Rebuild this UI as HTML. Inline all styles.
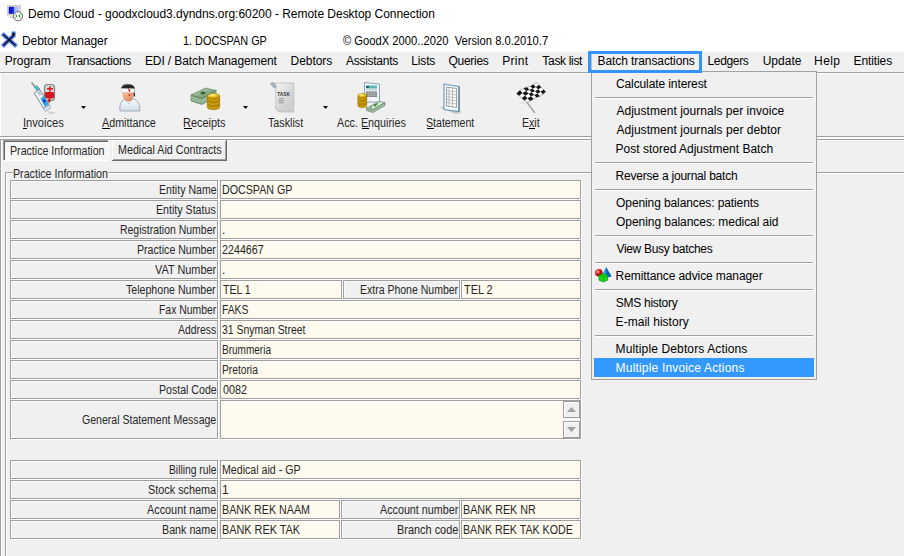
<!DOCTYPE html>
<html><head><meta charset="utf-8"><style>
html,body{margin:0;padding:0;}
body{width:904px;height:556px;position:relative;overflow:hidden;background:#f0f0f0;font-family:"Liberation Sans", sans-serif;}
.t{position:absolute;white-space:pre;line-height:20px;font-family:"Liberation Sans", sans-serif;}
.a{position:absolute;box-sizing:border-box;}
</style></head><body>
<div class="a" style="left:0px;top:0px;width:904px;height:52px;background:#fff"></div>
<div class="a" style="left:0px;top:72px;width:904px;height:1px;background:#a0a0a0"></div>
<div class="a" style="left:0px;top:73px;width:904px;height:1px;background:#ffffff"></div>
<div class="a" style="left:0px;top:73px;width:1px;height:63px;background:#ffffff"></div>
<div class="a" style="left:0px;top:136px;width:904px;height:1px;background:#a0a0a0"></div>
<div class="a" style="left:0px;top:137px;width:904px;height:1px;background:#ffffff"></div>
<div class="a" style="left:0px;top:138px;width:904px;height:1px;background:#ffffff"></div>
<div class="a" style="left:0px;top:139px;width:904px;height:1px;background:#a0a0a0"></div>
<div class="a" style="left:0px;top:140px;width:904px;height:1px;background:#f6f6f6"></div>
<div class="a" style="left:0px;top:139px;width:1px;height:417px;background:#a0a0a0"></div>
<div class="a" style="left:1px;top:140px;width:1px;height:416px;background:#ffffff"></div>
<div class="a" style="left:3px;top:140px;width:105px;height:20px;background:repeating-conic-gradient(#fff 0 25%,#f0f0f0 0 50%) 0 0/2px 2px;border-top:1px solid #a0a0a0;border-left:1px solid #a0a0a0;box-shadow:inset 1px 1px 0 #696969, 1px 1px 0 #fff"></div>
<div class="a" style="left:112px;top:140px;width:115px;height:21px;background:#f0f0f0;border-right:1px solid #696969;border-bottom:1px solid #696969;box-shadow:inset 1px 1px 0 #fff, inset -1px -1px 0 #a0a0a0"></div>
<div class="a" style="left:5px;top:172px;width:899px;height:1px;background:#a0a0a0"></div>
<div class="a" style="left:6px;top:173px;width:898px;height:1px;background:#ffffff"></div>
<div class="a" style="left:5px;top:172px;width:1px;height:384px;background:#a0a0a0"></div>
<div class="a" style="left:6px;top:173px;width:1px;height:383px;background:#ffffff"></div>
<div class="a" style="left:13px;top:165px;width:95px;height:12px;background:#f0f0f0"></div>
<div class="a" style="left:10px;top:180px;width:208px;height:19px;background:#f0f0f0;border:1px solid #a0a0a0;box-shadow:inset 1px 1px 0 rgba(255,255,255,0.6), 1px 1px 0 #fff"></div>
<div class="a" style="left:220px;top:180px;width:361px;height:19px;background:#fefaee;border:1px solid #a0a0a0;box-shadow:inset 1px 1px 0 rgba(255,255,255,0.6), 1px 1px 0 #fff"></div>
<div class="a" style="left:10px;top:200px;width:208px;height:19px;background:#f0f0f0;border:1px solid #a0a0a0;box-shadow:inset 1px 1px 0 rgba(255,255,255,0.6), 1px 1px 0 #fff"></div>
<div class="a" style="left:220px;top:200px;width:361px;height:19px;background:#fefaee;border:1px solid #a0a0a0;box-shadow:inset 1px 1px 0 rgba(255,255,255,0.6), 1px 1px 0 #fff"></div>
<div class="a" style="left:10px;top:220px;width:208px;height:19px;background:#f0f0f0;border:1px solid #a0a0a0;box-shadow:inset 1px 1px 0 rgba(255,255,255,0.6), 1px 1px 0 #fff"></div>
<div class="a" style="left:220px;top:220px;width:361px;height:19px;background:#fefaee;border:1px solid #a0a0a0;box-shadow:inset 1px 1px 0 rgba(255,255,255,0.6), 1px 1px 0 #fff"></div>
<div class="a" style="left:10px;top:240px;width:208px;height:19px;background:#f0f0f0;border:1px solid #a0a0a0;box-shadow:inset 1px 1px 0 rgba(255,255,255,0.6), 1px 1px 0 #fff"></div>
<div class="a" style="left:220px;top:240px;width:361px;height:19px;background:#fefaee;border:1px solid #a0a0a0;box-shadow:inset 1px 1px 0 rgba(255,255,255,0.6), 1px 1px 0 #fff"></div>
<div class="a" style="left:10px;top:260px;width:208px;height:19px;background:#f0f0f0;border:1px solid #a0a0a0;box-shadow:inset 1px 1px 0 rgba(255,255,255,0.6), 1px 1px 0 #fff"></div>
<div class="a" style="left:220px;top:260px;width:361px;height:19px;background:#fefaee;border:1px solid #a0a0a0;box-shadow:inset 1px 1px 0 rgba(255,255,255,0.6), 1px 1px 0 #fff"></div>
<div class="a" style="left:10px;top:280px;width:208px;height:19px;background:#f0f0f0;border:1px solid #a0a0a0;box-shadow:inset 1px 1px 0 rgba(255,255,255,0.6), 1px 1px 0 #fff"></div>
<div class="a" style="left:220px;top:280px;width:122px;height:19px;background:#fefaee;border:1px solid #a0a0a0;box-shadow:inset 1px 1px 0 rgba(255,255,255,0.6), 1px 1px 0 #fff"></div>
<div class="a" style="left:343px;top:280px;width:117px;height:19px;background:#f0f0f0;border:1px solid #a0a0a0;box-shadow:inset 1px 1px 0 rgba(255,255,255,0.6), 1px 1px 0 #fff"></div>
<div class="a" style="left:461px;top:280px;width:120px;height:19px;background:#fefaee;border:1px solid #a0a0a0;box-shadow:inset 1px 1px 0 rgba(255,255,255,0.6), 1px 1px 0 #fff"></div>
<div class="a" style="left:10px;top:300px;width:208px;height:19px;background:#f0f0f0;border:1px solid #a0a0a0;box-shadow:inset 1px 1px 0 rgba(255,255,255,0.6), 1px 1px 0 #fff"></div>
<div class="a" style="left:220px;top:300px;width:361px;height:19px;background:#fefaee;border:1px solid #a0a0a0;box-shadow:inset 1px 1px 0 rgba(255,255,255,0.6), 1px 1px 0 #fff"></div>
<div class="a" style="left:10px;top:320px;width:208px;height:19px;background:#f0f0f0;border:1px solid #a0a0a0;box-shadow:inset 1px 1px 0 rgba(255,255,255,0.6), 1px 1px 0 #fff"></div>
<div class="a" style="left:220px;top:320px;width:361px;height:19px;background:#fefaee;border:1px solid #a0a0a0;box-shadow:inset 1px 1px 0 rgba(255,255,255,0.6), 1px 1px 0 #fff"></div>
<div class="a" style="left:10px;top:340px;width:208px;height:19px;background:#f0f0f0;border:1px solid #a0a0a0;box-shadow:inset 1px 1px 0 rgba(255,255,255,0.6), 1px 1px 0 #fff"></div>
<div class="a" style="left:220px;top:340px;width:361px;height:19px;background:#fefaee;border:1px solid #a0a0a0;box-shadow:inset 1px 1px 0 rgba(255,255,255,0.6), 1px 1px 0 #fff"></div>
<div class="a" style="left:10px;top:360px;width:208px;height:19px;background:#f0f0f0;border:1px solid #a0a0a0;box-shadow:inset 1px 1px 0 rgba(255,255,255,0.6), 1px 1px 0 #fff"></div>
<div class="a" style="left:220px;top:360px;width:361px;height:19px;background:#fefaee;border:1px solid #a0a0a0;box-shadow:inset 1px 1px 0 rgba(255,255,255,0.6), 1px 1px 0 #fff"></div>
<div class="a" style="left:10px;top:380px;width:208px;height:19px;background:#f0f0f0;border:1px solid #a0a0a0;box-shadow:inset 1px 1px 0 rgba(255,255,255,0.6), 1px 1px 0 #fff"></div>
<div class="a" style="left:220px;top:380px;width:361px;height:19px;background:#fefaee;border:1px solid #a0a0a0;box-shadow:inset 1px 1px 0 rgba(255,255,255,0.6), 1px 1px 0 #fff"></div>
<div class="a" style="left:10px;top:400px;width:208px;height:39px;background:#f0f0f0;border:1px solid #a0a0a0;box-shadow:inset 1px 1px 0 rgba(255,255,255,0.6), 1px 1px 0 #fff"></div>
<div class="a" style="left:220px;top:400px;width:361px;height:39px;background:#fefaee;border:1px solid #a0a0a0;box-shadow:inset 1px 1px 0 rgba(255,255,255,0.6), 1px 1px 0 #fff"></div>
<div class="a" style="left:563px;top:401px;width:17px;height:17px;background:#f0f0f0;border:1px solid #a0a0a0;box-shadow:inset 1px 1px 0 #fff"></div>
<div class="a" style="left:563px;top:418px;width:17px;height:3px;background:repeating-conic-gradient(#fff 0 25%,#f0f0f0 0 50%) 0 0/2px 2px"></div>
<div class="a" style="left:563px;top:421px;width:17px;height:17px;background:#f0f0f0;border:1px solid #a0a0a0;box-shadow:inset 1px 1px 0 #fff"></div>
<svg class="a" style="left:563px;top:401px" width="17" height="37"><path d="M4 11h9l-4.5-5z" fill="#a0a0a0"/><path d="M4 26h9l-4.5 5z" fill="#a0a0a0"/></svg>
<div class="a" style="left:10px;top:460px;width:208px;height:19px;background:#f0f0f0;border:1px solid #a0a0a0;box-shadow:inset 1px 1px 0 rgba(255,255,255,0.6), 1px 1px 0 #fff"></div>
<div class="a" style="left:220px;top:460px;width:361px;height:19px;background:#fefaee;border:1px solid #a0a0a0;box-shadow:inset 1px 1px 0 rgba(255,255,255,0.6), 1px 1px 0 #fff"></div>
<div class="a" style="left:10px;top:480px;width:208px;height:19px;background:#f0f0f0;border:1px solid #a0a0a0;box-shadow:inset 1px 1px 0 rgba(255,255,255,0.6), 1px 1px 0 #fff"></div>
<div class="a" style="left:220px;top:480px;width:361px;height:19px;background:#fefaee;border:1px solid #a0a0a0;box-shadow:inset 1px 1px 0 rgba(255,255,255,0.6), 1px 1px 0 #fff"></div>
<div class="a" style="left:10px;top:500px;width:208px;height:19px;background:#f0f0f0;border:1px solid #a0a0a0;box-shadow:inset 1px 1px 0 rgba(255,255,255,0.6), 1px 1px 0 #fff"></div>
<div class="a" style="left:220px;top:500px;width:120px;height:19px;background:#fefaee;border:1px solid #a0a0a0;box-shadow:inset 1px 1px 0 rgba(255,255,255,0.6), 1px 1px 0 #fff"></div>
<div class="a" style="left:341px;top:500px;width:119px;height:19px;background:#f0f0f0;border:1px solid #a0a0a0;box-shadow:inset 1px 1px 0 rgba(255,255,255,0.6), 1px 1px 0 #fff"></div>
<div class="a" style="left:461px;top:500px;width:120px;height:19px;background:#fefaee;border:1px solid #a0a0a0;box-shadow:inset 1px 1px 0 rgba(255,255,255,0.6), 1px 1px 0 #fff"></div>
<div class="a" style="left:10px;top:520px;width:208px;height:19px;background:#f0f0f0;border:1px solid #a0a0a0;box-shadow:inset 1px 1px 0 rgba(255,255,255,0.6), 1px 1px 0 #fff"></div>
<div class="a" style="left:220px;top:520px;width:120px;height:19px;background:#fefaee;border:1px solid #a0a0a0;box-shadow:inset 1px 1px 0 rgba(255,255,255,0.6), 1px 1px 0 #fff"></div>
<div class="a" style="left:341px;top:520px;width:119px;height:19px;background:#f0f0f0;border:1px solid #a0a0a0;box-shadow:inset 1px 1px 0 rgba(255,255,255,0.6), 1px 1px 0 #fff"></div>
<div class="a" style="left:461px;top:520px;width:120px;height:19px;background:#fefaee;border:1px solid #a0a0a0;box-shadow:inset 1px 1px 0 rgba(255,255,255,0.6), 1px 1px 0 #fff"></div>
<div class="a" style="left:591px;top:71px;width:226px;height:309px;background:#f0f0f0;border:1px solid #a0a0a0"></div>
<div class="a" style="left:595px;top:97px;width:218px;height:1px;background:#a0a0a0"></div>
<div class="a" style="left:595px;top:98px;width:218px;height:1px;background:#ffffff"></div>
<div class="a" style="left:595px;top:162px;width:218px;height:1px;background:#a0a0a0"></div>
<div class="a" style="left:595px;top:163px;width:218px;height:1px;background:#ffffff"></div>
<div class="a" style="left:595px;top:189px;width:218px;height:1px;background:#a0a0a0"></div>
<div class="a" style="left:595px;top:190px;width:218px;height:1px;background:#ffffff"></div>
<div class="a" style="left:595px;top:235px;width:218px;height:1px;background:#a0a0a0"></div>
<div class="a" style="left:595px;top:236px;width:218px;height:1px;background:#ffffff"></div>
<div class="a" style="left:595px;top:262px;width:218px;height:1px;background:#a0a0a0"></div>
<div class="a" style="left:595px;top:263px;width:218px;height:1px;background:#ffffff"></div>
<div class="a" style="left:595px;top:289px;width:218px;height:1px;background:#a0a0a0"></div>
<div class="a" style="left:595px;top:290px;width:218px;height:1px;background:#ffffff"></div>
<div class="a" style="left:595px;top:335px;width:218px;height:1px;background:#a0a0a0"></div>
<div class="a" style="left:595px;top:336px;width:218px;height:1px;background:#ffffff"></div>
<div class="a" style="left:594px;top:358px;width:220px;height:19px;background:#3399ff"></div>
<div class="a" style="left:588px;top:51px;width:114px;height:22px;border:3px solid #3393ff;background:#f0f0f0"></div>
<div class="a" style="left:591px;top:54px;width:1px;height:16px;background:#c8c0b8"></div>
<svg class="a" style="left:81px;top:106px" width="6" height="3"><path d="M0 0h5l-2.5 3z" fill="#000"/></svg>
<svg class="a" style="left:243px;top:106px" width="6" height="3"><path d="M0 0h5l-2.5 3z" fill="#000"/></svg>
<svg class="a" style="left:323px;top:106px" width="6" height="3"><path d="M0 0h5l-2.5 3z" fill="#000"/></svg>
<div class="a" style="left:23px;top:128px;width:4px;height:1px;background:#000"></div>
<div class="a" style="left:102px;top:128px;width:8px;height:1px;background:#000"></div>
<div class="a" style="left:184px;top:128px;width:8px;height:1px;background:#000"></div>
<div class="a" style="left:427px;top:128px;width:7px;height:1px;background:#000"></div>
<div class="a" style="left:362px;top:128px;width:7px;height:1px;background:#000"></div>
<div class="a" style="left:529px;top:128px;width:6px;height:1px;background:#000"></div>
<svg class="a" style="left:0;top:0" width="904" height="556" viewBox="0 0 904 556">
<defs>
<linearGradient id="gsk" x1="0" y1="0" x2="1" y2="1"><stop offset="0" stop-color="#f7c3a0"/><stop offset="1" stop-color="#d9825a"/></linearGradient>
<linearGradient id="gcoat" x1="0" y1="0" x2="0" y2="1"><stop offset="0" stop-color="#ffffff"/><stop offset="1" stop-color="#cfdce8"/></linearGradient>
<radialGradient id="ggold" cx="0.4" cy="0.3" r="0.8"><stop offset="0" stop-color="#fff6a0"/><stop offset="0.5" stop-color="#e8c21a"/><stop offset="1" stop-color="#a67a00"/></radialGradient>
<linearGradient id="gbill" x1="0" y1="0" x2="1" y2="1"><stop offset="0" stop-color="#b9d4b9"/><stop offset="1" stop-color="#5c8a5c"/></linearGradient>
<linearGradient id="gpaper" x1="0" y1="0" x2="1" y2="1"><stop offset="0" stop-color="#f4f4f4"/><stop offset="1" stop-color="#c4c4c4"/></linearGradient>
<radialGradient id="gred" cx="0.35" cy="0.35" r="0.7"><stop offset="0" stop-color="#ffb0b0"/><stop offset="0.5" stop-color="#e01010"/><stop offset="1" stop-color="#800000"/></radialGradient>
</defs>
<!-- RDP icon -->
<linearGradient id="gscr" x1="0" y1="0" x2="1" y2="0"><stop offset="0" stop-color="#0010c8"/><stop offset="0.45" stop-color="#1a2ae8"/><stop offset="0.5" stop-color="#90a8ff"/><stop offset="1" stop-color="#c8d4ff"/></linearGradient>
<rect x="7.3" y="5.3" width="13.4" height="9.8" fill="#dcd8d0" stroke="#c4c0b8" stroke-width="0.6"/>
<rect x="8.8" y="6.8" width="10.6" height="7" fill="url(#gscr)"/>
<rect x="10" y="16.5" width="6" height="1.6" fill="#c8c8c8"/>
<circle cx="18" cy="16.2" r="4.6" fill="#f6f6f6" stroke="#6a6a6a" stroke-width="1"/>
<path d="M15.3 14.5l1.7 1.6-1.7 1.7M20.7 14.3l-1.8 1.7 1.8 1.6" stroke="#109a10" stroke-width="1" fill="none"/>
<!-- X app icon -->
<g stroke="#3a6cf8" stroke-width="4.2" stroke-linecap="square" fill="none" opacity="0.85">
<path d="M3.8 35l11.2 10M3.8 45l9.8-9.5V33.5"/>
</g>
<g stroke="#000" stroke-width="1.3" stroke-linecap="square" fill="none">
<path d="M3.8 35l11.2 10M3.8 45l9.8-9.5V33.5"/>
</g>
<rect x="12.3" y="33" width="2.4" height="2.2" fill="#000"/>
<!-- syringe -->
<rect x="44.5" y="84.5" width="10" height="16" rx="3" fill="#d4d8d8" stroke="#7a8484" stroke-width="1.2"/>
<path d="M45 92.5q5-1.5 9 0v5q-4 2.5-9 0z" fill="#d8141a"/>
<path d="M47 88h2.2v-1.8h1.6v1.8h2.2v1.6h-2.2v2h-1.6v-2h-2.2z" fill="#e01818"/>
<path d="M48.3 99h2v3.5h-2z" fill="#c01010"/>
<path d="M31.5 82.5l4.5 5.5" stroke="#8a8a8a" stroke-width="1.4"/>
<path d="M34.5 87.5l2.5-1.8 3 3.8-2.5 1.8z" fill="#30c8e0" stroke="#5a8a96" stroke-width="0.6"/>
<path d="M34.3 93.3l4.9-4.3 10 15.8-5.6 3.6z" fill="#eef6fa" stroke="#70788a" stroke-width="0.9"/>
<path d="M40.5 98.5l3.5-2.5 4.6 8.3-3.8 2.4z" fill="#2aa4ec"/>
<path d="M42.5 100.5l2-1.5 1.5 2.5-2 1.5z" fill="#0a3ac8"/>
<path d="M37 92l2-1.5 2.5 4-2 1.5z" fill="#b8c4cc"/>
<path d="M43.5 108.5l5.5-3.5 1.8 2.8-5.5 3.5z" fill="#dde6ee" stroke="#8a90a0" stroke-width="0.7"/>
<path d="M47 111l10 1.5-7 2z" fill="#bdbdbd" opacity="0.6"/>
<!-- admittance person -->
<path d="M120 111q-1.5-9 5.5-12.5l3.5 2.5 4-2.5q7.5 3 7 12.5z" fill="url(#gcoat)" stroke="#98a6b2" stroke-width="0.9"/>
<path d="M124.5 99l4.5 5 4-5" fill="none" stroke="#b0bcc6" stroke-width="0.8"/>
<path d="M122.3 91.5q-0.3 9.5 6 10q5.5 0 5.5-9.5z" fill="url(#gsk)"/>
<path d="M121 89.5q0-5 7-5.3 6.5 0 7 5v7.5l-1.3-0.5v-5h-12.6z" fill="#262626"/>
<path d="M122 85.5q3-1.5 6-1.3" stroke="#777" stroke-width="0.7" fill="none"/>
<path d="M121 88.5l13.6 0.2v3.8l-13.6-0.2z" fill="#fafafa" stroke="#c8c8c8" stroke-width="0.5"/>
<path d="M128.3 89q1.6 1 1.4 2.8" stroke="#e00000" stroke-width="1.2" fill="none"/>
<path d="M128.7 94q1 0.8 1 2" stroke="#e00000" stroke-width="1" fill="none"/>
<!-- receipts: bills + coins -->
<path d="M191 95l14.5-7 11 2.5-14 8z" fill="url(#gbill)" stroke="#5a7a5a" stroke-width="0.6"/>
<path d="M191 95v6l11 3.5 14-8v-6l-14 8z" fill="#7da27d" stroke="#5a7a5a" stroke-width="0.6"/>
<path d="M191 97l11 3.5 14-8M191 99l11 3.5 14-8" stroke="#cfe3cf" stroke-width="0.6" fill="none"/>
<ellipse cx="203" cy="93" rx="2.5" ry="1.2" fill="#2f5f2f"/>
<path d="M207.3 104.0v3.2a6.2 2.6 0 0 0 12.4 0v-3.2z" fill="#c89a08" stroke="#8a6400" stroke-width="0.5"/>
<ellipse cx="213.5" cy="104.0" rx="6.2" ry="2.6" fill="url(#ggold)" stroke="#9a7200" stroke-width="0.5"/>
<path d="M207.3 100.0v3.2a6.2 2.6 0 0 0 12.4 0v-3.2z" fill="#c89a08" stroke="#8a6400" stroke-width="0.5"/>
<ellipse cx="213.5" cy="100.0" rx="6.2" ry="2.6" fill="url(#ggold)" stroke="#9a7200" stroke-width="0.5"/>
<path d="M207.3 96.0v3.2a6.2 2.6 0 0 0 12.4 0v-3.2z" fill="#c89a08" stroke="#8a6400" stroke-width="0.5"/>
<ellipse cx="213.5" cy="96.0" rx="6.2" ry="2.6" fill="url(#ggold)" stroke="#9a7200" stroke-width="0.5"/>
<!-- tasklist paper -->
<path d="M275 108q2 4 6 4.5h13v-2z" fill="#a8a8a8" opacity="0.5"/>
<path d="M276 83h17.8v28.2h-15q-2.5-1-3.5-3.5q1-3 0.5-6v-15q0-2.5-1-3.7z" fill="url(#gpaper)" stroke="#b4b4b4" stroke-width="0.7"/>
<path d="M270.3 83.5l4 4.5 2.2-1.6-3.4-4z" fill="#a4b8c4" stroke="#7a8a96" stroke-width="0.6"/>
<text x="277.3" y="96" font-family="Liberation Sans" font-weight="bold" font-size="5.4" fill="#383838" textLength="12.6" lengthAdjust="spacingAndGlyphs">TASK</text>
<path d="M278.5 98.8h5.3M278.5 100.8h5.3M278.5 102.8h5.3" stroke="#8a8a8a" stroke-width="0.9"/>
<path d="M277 109q8-6 16.8-4v6.2h-15z" fill="#d0d0d0" opacity="0.8"/>
<!-- acc enquiries -->
<path d="M364.5 82.5l15 1.5v18h-15z" fill="#f0f4f6" stroke="#7c9cb6" stroke-width="0.9"/>
<rect x="366" y="85.5" width="11" height="3" fill="#5ab8b8"/>
<rect x="366" y="86" width="3" height="2" fill="#1a6a6a"/>
<path d="M366 90h11" stroke="#9aa4a8" stroke-width="0.6"/>
<rect x="366" y="91.5" width="11" height="5.5" fill="#7a7e80"/>
<path d="M366 93.3h11M366 95.2h11M368.8 91.5v5.5M371.5 91.5v5.5M374.2 91.5v5.5" stroke="#d4dadc" stroke-width="0.5"/>
<path d="M357.9 102.8v2.6a4.4 2.1 0 0 0 8.8 0v-2.6z" fill="#c89a08" stroke="#8a6400" stroke-width="0.5"/>
<ellipse cx="362.3" cy="102.8" rx="4.4" ry="2.1" fill="url(#ggold)" stroke="#9a7200" stroke-width="0.5"/>
<path d="M357.9 99.2v2.6a4.4 2.1 0 0 0 8.8 0v-2.6z" fill="#c89a08" stroke="#8a6400" stroke-width="0.5"/>
<ellipse cx="362.3" cy="99.2" rx="4.4" ry="2.1" fill="url(#ggold)" stroke="#9a7200" stroke-width="0.5"/>
<path d="M357.9 95.6v2.6a4.4 2.1 0 0 0 8.8 0v-2.6z" fill="#c89a08" stroke="#8a6400" stroke-width="0.5"/>
<ellipse cx="362.3" cy="95.6" rx="4.4" ry="2.1" fill="url(#ggold)" stroke="#9a7200" stroke-width="0.5"/>
<path d="M366.5 108l12.5-6.5 6 1-12 7z" fill="#d6ead6" stroke="#5a7a5a" stroke-width="0.6"/>
<path d="M366.5 108v2.5l6.5 2 12-7v-3l-12 7z" fill="#9abc9a" stroke="#5a7a5a" stroke-width="0.6"/>
<path d="M370 107.5l2-1M376 104.5l2-1" stroke="#3a8a3a" stroke-width="1.2"/>
<circle cx="375" cy="105.3" r="1.3" fill="#3a8a3a"/>
<!-- statement page -->
<path d="M439.5 107.5l4.5-1.5 16.5 4.5v3l-5 0.5z" fill="#9a9a9a" opacity="0.45"/>
<path d="M444 84l15 2.5v25l-15-2z" fill="#f4f8fa" stroke="#6a9ab8" stroke-width="1.1"/><path d="M459 86.5v25" stroke="#4a6a88" stroke-width="1"/>
<path d="M446.5 87l10 1.5v19l-10-1.5z" fill="#fafafa" stroke="#8a8a8a" stroke-width="0.8"/>
<path d="M449 87.5v19M452.5 88v19M446.5 90.5l10 1.5M446.5 93.5l10 1.5M446.5 96.5l10 1.5M446.5 99.5l10 1.5M446.5 102.5l10 1.5" stroke="#9a9a9a" stroke-width="0.6"/>
<!-- exit flag -->
<path d="M527 102.5l8 10.5" stroke="#a4a4a4" stroke-width="1.5"/>
<path d="M520 103.5l7-1.5" stroke="#c0c0c0" stroke-width="0.6"/>
<path d="M516.50 93.50 L520.00 90.30 L523.70 88.30 L527.00 87.20 L530.30 86.30 L533.50 84.60 L536.70 82.60 L538.95 84.88 L541.20 87.15 L543.45 89.42 L545.70 91.70 L543.00 94.20 L539.90 96.20 L536.50 97.50 L533.40 99.00 L530.00 101.00 L527.00 102.70 L524.38 100.40 L521.75 98.10 L519.12 95.80z" fill="#fbfbfb" stroke="#707070" stroke-width="0.5"/>
<path d="M516.50 93.50 L520.00 90.30 L522.50 92.97 L519.12 95.80z M521.75 98.10 L525.00 95.65 L527.50 98.33 L524.38 100.40z M522.50 92.97 L526.12 90.97 L528.55 93.65 L525.00 95.65z M527.50 98.33 L530.98 96.33 L533.40 99.00 L530.00 101.00z M523.70 88.30 L527.00 87.20 L529.38 89.78 L526.12 90.97z M528.55 93.65 L531.75 92.35 L534.12 94.92 L530.98 96.33z M529.38 89.78 L532.70 88.78 L535.10 91.25 L531.75 92.35z M534.12 94.92 L537.50 93.72 L539.90 96.20 L536.50 97.50z M530.30 86.30 L533.50 84.60 L535.88 87.00 L532.70 88.78z M535.10 91.25 L538.25 89.40 L540.62 91.80 L537.50 93.72z M535.88 87.00 L538.95 84.88 L541.20 87.15 L538.25 89.40z M540.62 91.80 L543.45 89.42 L545.70 91.70 L543.00 94.20z" fill="#141414"/>
<!-- remittance icon -->
<path d="M606 267l5.5 9.5-5 1-5-1z" fill="#2a9af0"/>
<path d="M606 267l5.5 9.5-5 1z" fill="#0a62c0"/>
<circle cx="598.8" cy="272.8" r="3.8" fill="url(#gred)"/>
<path d="M599 275.2l4.3-1.7 4.3 1.7v5l-4.3 1.8-4.3-1.8z" fill="#18d818" stroke="#0a8a0a" stroke-width="0.6"/>
<path d="M599 275.2l4.3 1.7 4.3-1.7M603.3 276.9v5" stroke="#0a9a0a" stroke-width="0.5" fill="none"/>
</svg>
<div id="ti1" class="t" style="left:28.00px;top:4.00px;font-size:12.00px;letter-spacing:-0.029px;color:#000">Demo Cloud - goodxcloud3.dyndns.org:60200 - Remote Desktop Connection</div>
<div id="ti2" class="t" style="left:22.00px;top:31.00px;font-size:12.00px;letter-spacing:-0.081px;color:#000">Debtor Manager</div>
<div id="ti3" class="t" style="left:183.29px;top:31.00px;font-size:12.00px;letter-spacing:0.000px;color:#000;transform:scaleX(0.9072);transform-origin:0 0">1. DOCSPAN GP</div>
<div id="ti4" class="t" style="left:342.55px;top:31.00px;font-size:12.00px;letter-spacing:0.000px;color:#000;transform:scaleX(0.9338);transform-origin:0 0">© GoodX 2000..2020  Version 8.0.2010.7</div>
<div id="m0" class="t" style="left:4.65px;top:51.00px;font-size:12.00px;letter-spacing:0.021px;color:#000">Program</div>
<div id="m1" class="t" style="left:66.14px;top:51.00px;font-size:12.00px;letter-spacing:-0.278px;color:#000">Transactions</div>
<div id="m2" class="t" style="left:144.93px;top:51.00px;font-size:12.00px;letter-spacing:-0.098px;color:#000">EDI / Batch Management</div>
<div id="m3" class="t" style="left:290.62px;top:51.00px;font-size:12.00px;letter-spacing:-0.081px;color:#000">Debtors</div>
<div id="m4" class="t" style="left:346.12px;top:51.00px;font-size:12.00px;letter-spacing:-0.290px;color:#000">Assistants</div>
<div id="m5" class="t" style="left:411.37px;top:51.00px;font-size:12.00px;letter-spacing:-0.167px;color:#000">Lists</div>
<div id="m6" class="t" style="left:448.54px;top:51.00px;font-size:12.00px;letter-spacing:-0.300px;color:#000">Queries</div>
<div id="m7" class="t" style="left:502.34px;top:51.00px;font-size:12.00px;letter-spacing:0.266px;color:#000">Print</div>
<div id="m8" class="t" style="left:542.36px;top:51.00px;font-size:12.00px;letter-spacing:-0.326px;color:#000">Task list</div>
<div id="m9" class="t" style="left:597.62px;top:51.00px;font-size:12.00px;letter-spacing:-0.089px;color:#000">Batch transactions</div>
<div id="m10" class="t" style="left:707.46px;top:51.00px;font-size:12.00px;letter-spacing:-0.328px;color:#000">Ledgers</div>
<div id="m11" class="t" style="left:762.67px;top:51.00px;font-size:12.00px;letter-spacing:0.009px;color:#000">Update</div>
<div id="m12" class="t" style="left:814.11px;top:51.00px;font-size:12.00px;letter-spacing:0.358px;color:#000">Help</div>
<div id="m13" class="t" style="left:853.62px;top:51.00px;font-size:12.00px;letter-spacing:-0.116px;color:#000">Entities</div>
<div id="d0" class="t" style="left:615.98px;top:74.00px;font-size:12.00px;letter-spacing:-0.106px;color:#000">Calculate interest</div>
<div id="d1" class="t" style="left:616.41px;top:101.00px;font-size:12.00px;letter-spacing:0.033px;color:#000">Adjustment journals per invoice</div>
<div id="d2" class="t" style="left:616.41px;top:120.00px;font-size:12.00px;letter-spacing:0.042px;color:#000">Adjustment journals per debtor</div>
<div id="d3" class="t" style="left:615.62px;top:139.00px;font-size:12.00px;letter-spacing:0.003px;color:#000">Post stored Adjustment Batch</div>
<div id="d4" class="t" style="left:615.62px;top:166.00px;font-size:12.00px;letter-spacing:-0.214px;color:#000">Reverse a journal batch</div>
<div id="d5" class="t" style="left:616.08px;top:193.00px;font-size:12.00px;letter-spacing:-0.103px;color:#000">Opening balances: patients</div>
<div id="d6" class="t" style="left:616.08px;top:212.00px;font-size:12.00px;letter-spacing:-0.062px;color:#000">Opening balances: medical aid</div>
<div id="d7" class="t" style="left:616.41px;top:239.00px;font-size:12.00px;letter-spacing:-0.307px;color:#000">View Busy batches</div>
<div id="d8" class="t" style="left:615.62px;top:266.00px;font-size:12.00px;letter-spacing:-0.099px;color:#000">Remittance advice manager</div>
<div id="d9" class="t" style="left:615.80px;top:293.00px;font-size:12.00px;letter-spacing:-0.285px;color:#000">SMS history</div>
<div id="d10" class="t" style="left:615.62px;top:312.00px;font-size:12.00px;letter-spacing:0.033px;color:#000">E-mail history</div>
<div id="d11" class="t" style="left:615.62px;top:339.00px;font-size:12.00px;letter-spacing:0.132px;color:#000">Multiple Debtors Actions</div>
<div id="d12" class="t" style="left:615.62px;top:358.00px;font-size:12.00px;letter-spacing:0.177px;color:#fff">Multiple Invoice Actions</div>
<div id="tb0" class="t" style="left:22.76px;top:113.00px;font-size:12.00px;letter-spacing:0.000px;color:#262626;transform:scaleX(0.9286);transform-origin:0 0">Invoices</div>
<div id="tb1" class="t" style="left:101.80px;top:113.00px;font-size:12.00px;letter-spacing:0.000px;color:#262626;transform:scaleX(0.8953);transform-origin:0 0">Admittance</div>
<div id="tb2" class="t" style="left:183.17px;top:113.00px;font-size:12.00px;letter-spacing:0.000px;color:#262626;transform:scaleX(0.9104);transform-origin:0 0">Receipts</div>
<div id="tb3" class="t" style="left:267.97px;top:113.00px;font-size:12.00px;letter-spacing:0.000px;color:#262626;transform:scaleX(0.8928);transform-origin:0 0">Tasklist</div>
<div id="tb4" class="t" style="left:336.80px;top:113.00px;font-size:12.00px;letter-spacing:0.000px;color:#262626;transform:scaleX(0.8971);transform-origin:0 0">Acc. Enquiries</div>
<div id="tb5" class="t" style="left:426.38px;top:113.00px;font-size:12.00px;letter-spacing:0.000px;color:#262626;transform:scaleX(0.8830);transform-origin:0 0">Statement</div>
<div id="tb6" class="t" style="left:521.67px;top:113.00px;font-size:12.00px;letter-spacing:0.000px;color:#262626;transform:scaleX(0.8835);transform-origin:0 0">Exit</div>
<div id="tab1" class="t" style="left:10.15px;top:141.00px;font-size:12.00px;letter-spacing:0.000px;color:#262626;transform:scaleX(0.8859);transform-origin:0 0">Practice Information</div>
<div id="tab2" class="t" style="left:118.15px;top:140.00px;font-size:12.00px;letter-spacing:0.000px;color:#262626;transform:scaleX(0.8934);transform-origin:0 0">Medical Aid Contracts</div>
<div id="grp" class="t" style="left:13.15px;top:164.00px;font-size:12.00px;letter-spacing:0.000px;color:#262626;transform:scaleX(0.8891);transform-origin:0 0">Practice Information</div>
<div id="l0" class="t" style="left:158.63px;top:180.00px;font-size:12.00px;letter-spacing:0.000px;color:#262626;transform:scaleX(0.8812);transform-origin:0 0">Entity Name</div>
<div id="l1" class="t" style="left:156.19px;top:200.00px;font-size:12.00px;letter-spacing:0.000px;color:#262626;transform:scaleX(0.8867);transform-origin:0 0">Entity Status</div>
<div id="l2" class="t" style="left:119.70px;top:220.00px;font-size:12.00px;letter-spacing:0.000px;color:#262626;transform:scaleX(0.8719);transform-origin:0 0">Registration Number</div>
<div id="l3" class="t" style="left:137.11px;top:240.00px;font-size:12.00px;letter-spacing:0.000px;color:#262626;transform:scaleX(0.8828);transform-origin:0 0">Practice Number</div>
<div id="l4" class="t" style="left:154.83px;top:260.00px;font-size:12.00px;letter-spacing:0.000px;color:#262626;transform:scaleX(0.9081);transform-origin:0 0">VAT Number</div>
<div id="l5" class="t" style="left:126.43px;top:280.00px;font-size:12.00px;letter-spacing:0.000px;color:#262626;transform:scaleX(0.8839);transform-origin:0 0">Telephone Number</div>
<div id="l6" class="t" style="left:158.71px;top:300.00px;font-size:12.00px;letter-spacing:0.000px;color:#262626;transform:scaleX(0.8673);transform-origin:0 0">Fax Number</div>
<div id="l7" class="t" style="left:177.76px;top:320.00px;font-size:12.00px;letter-spacing:0.000px;color:#262626;transform:scaleX(0.8681);transform-origin:0 0">Address</div>
<div id="l8" class="t" style="left:158.61px;top:380.00px;font-size:12.00px;letter-spacing:0.000px;color:#262626;transform:scaleX(0.8823);transform-origin:0 0">Postal Code</div>
<div id="l9" class="t" style="left:168.84px;top:460.00px;font-size:12.00px;letter-spacing:0.000px;color:#262626;transform:scaleX(0.8560);transform-origin:0 0">Billing rule</div>
<div id="l10" class="t" style="left:147.96px;top:480.00px;font-size:12.00px;letter-spacing:0.000px;color:#262626;transform:scaleX(0.9039);transform-origin:0 0">Stock schema</div>
<div id="l11" class="t" style="left:146.81px;top:500.00px;font-size:12.00px;letter-spacing:0.000px;color:#262626;transform:scaleX(0.9036);transform-origin:0 0">Account name</div>
<div id="l12" class="t" style="left:161.69px;top:520.00px;font-size:12.00px;letter-spacing:0.000px;color:#262626;transform:scaleX(0.8929);transform-origin:0 0">Bank name</div>
<div id="lgsm" class="t" style="left:81.66px;top:410.00px;font-size:12.00px;letter-spacing:0.000px;color:#262626;transform:scaleX(0.8788);transform-origin:0 0">General Statement Message</div>
<div id="lx1" class="t" style="left:359.71px;top:280.00px;font-size:12.00px;letter-spacing:0.000px;color:#262626;transform:scaleX(0.8752);transform-origin:0 0">Extra Phone Number</div>
<div id="lx2" class="t" style="left:379.76px;top:500.00px;font-size:12.00px;letter-spacing:0.000px;color:#262626;transform:scaleX(0.8952);transform-origin:0 0">Account number</div>
<div id="lx3" class="t" style="left:396.67px;top:520.00px;font-size:12.00px;letter-spacing:0.000px;color:#262626;transform:scaleX(0.9102);transform-origin:0 0">Branch code</div>
<div id="v0" class="t" style="left:222.15px;top:180.00px;font-size:12.00px;letter-spacing:0.000px;color:#262626;transform:scaleX(0.8894);transform-origin:0 0">DOCSPAN GP</div>
<div id="v1" class="t" style="left:222.00px;top:220.00px;font-size:12.00px;letter-spacing:0.000px;color:#262626">.</div>
<div id="v2" class="t" style="left:222.24px;top:240.00px;font-size:12.00px;letter-spacing:0.000px;color:#262626;transform:scaleX(0.8934);transform-origin:0 0">2244667</div>
<div id="v3" class="t" style="left:222.00px;top:260.00px;font-size:12.00px;letter-spacing:0.000px;color:#262626">.</div>
<div id="v4" class="t" style="left:222.97px;top:280.00px;font-size:12.00px;letter-spacing:0.000px;color:#262626;transform:scaleX(0.8763);transform-origin:0 0">TEL 1</div>
<div id="v5" class="t" style="left:222.31px;top:300.00px;font-size:12.00px;letter-spacing:0.000px;color:#262626;transform:scaleX(0.8602);transform-origin:0 0">FAKS</div>
<div id="v6" class="t" style="left:222.42px;top:320.00px;font-size:12.00px;letter-spacing:0.000px;color:#262626;transform:scaleX(0.8687);transform-origin:0 0">31 Snyman Street</div>
<div id="v7" class="t" style="left:222.33px;top:340.00px;font-size:12.00px;letter-spacing:0.000px;color:#262626;transform:scaleX(0.8351);transform-origin:0 0">Brummeria</div>
<div id="v8" class="t" style="left:222.33px;top:360.00px;font-size:12.00px;letter-spacing:0.000px;color:#262626;transform:scaleX(0.8528);transform-origin:0 0">Pretoria</div>
<div id="v9" class="t" style="left:222.64px;top:380.00px;font-size:12.00px;letter-spacing:0.000px;color:#262626;transform:scaleX(0.9045);transform-origin:0 0">0082</div>
<div id="v10" class="t" style="left:222.15px;top:460.00px;font-size:12.00px;letter-spacing:0.000px;color:#262626;transform:scaleX(0.8859);transform-origin:0 0">Medical aid - GP</div>
<div id="v11" class="t" style="left:222.00px;top:480.00px;font-size:12.00px;letter-spacing:0.000px;color:#262626">1</div>
<div id="v12" class="t" style="left:222.15px;top:500.00px;font-size:12.00px;letter-spacing:0.000px;color:#262626;transform:scaleX(0.8916);transform-origin:0 0">BANK REK NAAM</div>
<div id="v13" class="t" style="left:222.13px;top:520.00px;font-size:12.00px;letter-spacing:0.000px;color:#262626;transform:scaleX(0.9048);transform-origin:0 0">BANK REK TAK</div>
<div id="vx1" class="t" style="left:463.89px;top:280.00px;font-size:12.00px;letter-spacing:0.000px;color:#262626;transform:scaleX(0.9051);transform-origin:0 0">TEL 2</div>
<div id="vx2" class="t" style="left:463.15px;top:500.00px;font-size:12.00px;letter-spacing:0.000px;color:#262626;transform:scaleX(0.8935);transform-origin:0 0">BANK REK NR</div>
<div id="vx3" class="t" style="left:463.15px;top:520.00px;font-size:12.00px;letter-spacing:0.000px;color:#262626;transform:scaleX(0.8888);transform-origin:0 0">BANK REK TAK KODE</div>
</body></html>
